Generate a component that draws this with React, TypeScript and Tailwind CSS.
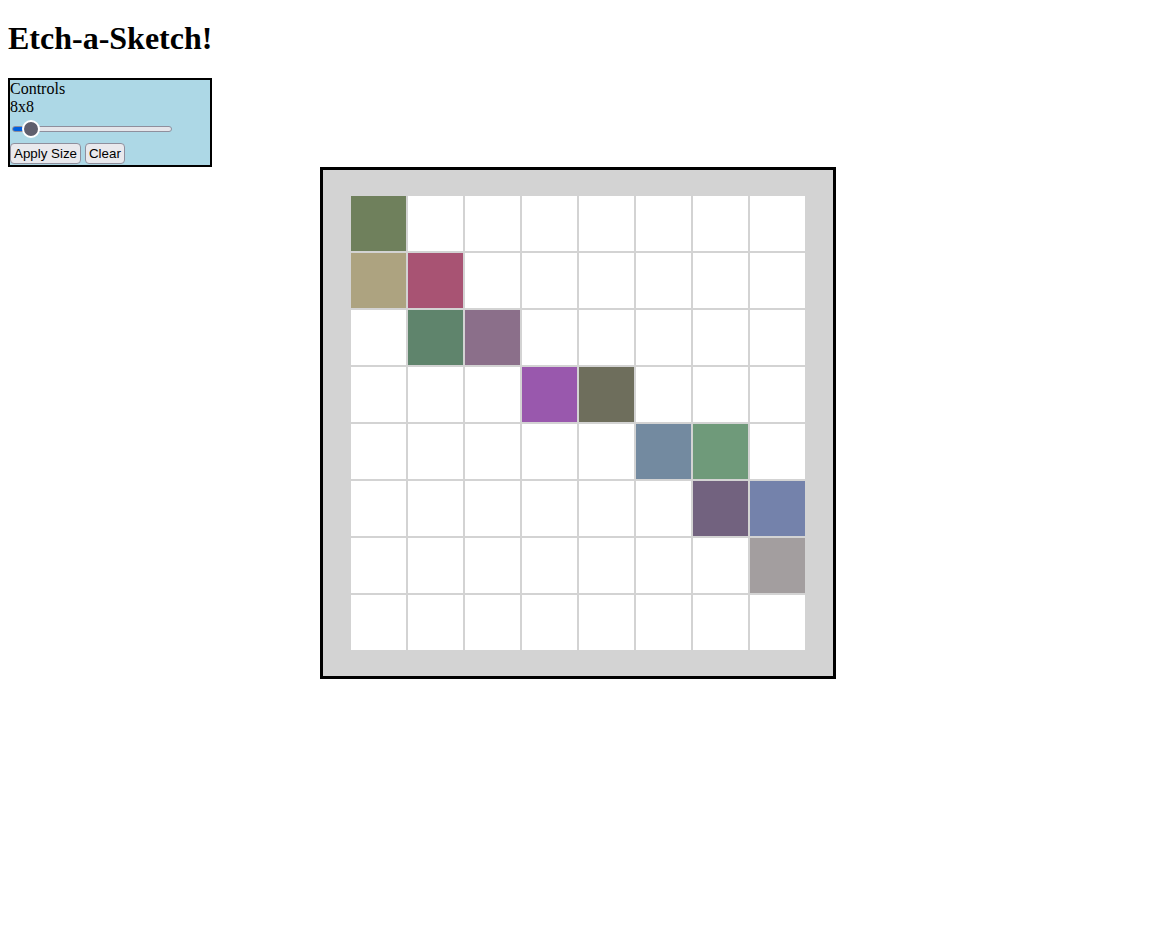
import { useState } from 'react';

const SIZE = 8;

// painted cells, keyed by "row-col"
const PAINTED: Record<string, string> = {
  '0-0': '#6f805c',
  '1-0': '#ada380',
  '1-1': '#a85373',
  '2-1': '#5f846c',
  '2-2': '#8b6f8a',
  '3-3': '#9958ad',
  '3-4': '#6e6e5c',
  '4-5': '#738aa0',
  '4-6': '#6f9a7a',
  '5-6': '#72627f',
  '5-7': '#7482ab',
  '6-7': '#a39e9f',
};

export default function App() {
  const [size, setSize] = useState(SIZE);

  return (
    <div className="min-h-screen bg-white px-2 font-['Liberation_Serif',serif] text-base text-black">
      <h1 className="mt-[20px] mb-[21px] text-[32px] font-bold leading-[37px]">Etch-a-Sketch!</h1>

      <div className="flex w-[204px] flex-col border-2 border-black bg-[#add8e6]">
        <div className="leading-[18px]">Controls</div>
        <div className="leading-[18px]">{size}x{size}</div>
        <div className="flex h-[25px] items-center pl-[2px]">
          <input
            type="range"
            min={2}
            max={100}
            value={size}
            onChange={(e) => setSize(Number(e.target.value))}
            className="h-[6px] w-[160px] cursor-pointer appearance-none rounded-full border border-[#8f8f9d] bg-[linear-gradient(to_right,#0060df_0_10px,#e5e5ea_10px)] [&::-webkit-slider-thumb]:h-[18px] [&::-webkit-slider-thumb]:w-[18px] [&::-webkit-slider-thumb]:appearance-none [&::-webkit-slider-thumb]:rounded-full [&::-webkit-slider-thumb]:border-2 [&::-webkit-slider-thumb]:border-white [&::-webkit-slider-thumb]:bg-[#5f5f6d]"
          />
        </div>
        <div className="flex gap-[4px] pt-[2px] pb-[1px] font-['Liberation_Sans',Arial,sans-serif] text-[13.33px]">
          <button type="button" className="h-[21px] rounded-[4px] border border-[#8f8f9d] bg-[#e9e9ed] px-[3px] leading-none">
            Apply Size
          </button>
          <button type="button" className="h-[21px] rounded-[4px] border border-[#8f8f9d] bg-[#e9e9ed] px-[3px] leading-none">
            Clear
          </button>
        </div>
      </div>

      <div className="flex justify-center pl-[3px]">
        <div className="flex h-[512px] w-[516px] items-center justify-center border-[3px] border-black bg-[#d3d3d3]">
          <div className="grid grid-cols-8">
            {Array.from({ length: SIZE * SIZE }, (_, i) => {
              const key = `${Math.floor(i / SIZE)}-${i % SIZE}`;
              return (
                <div
                  key={key}
                  className="h-[57px] w-[57px] border border-[#d3d3d3]"
                  style={{ backgroundColor: PAINTED[key] ?? '#ffffff' }}
                />
              );
            })}
          </div>
        </div>
      </div>
    </div>
  );
}
